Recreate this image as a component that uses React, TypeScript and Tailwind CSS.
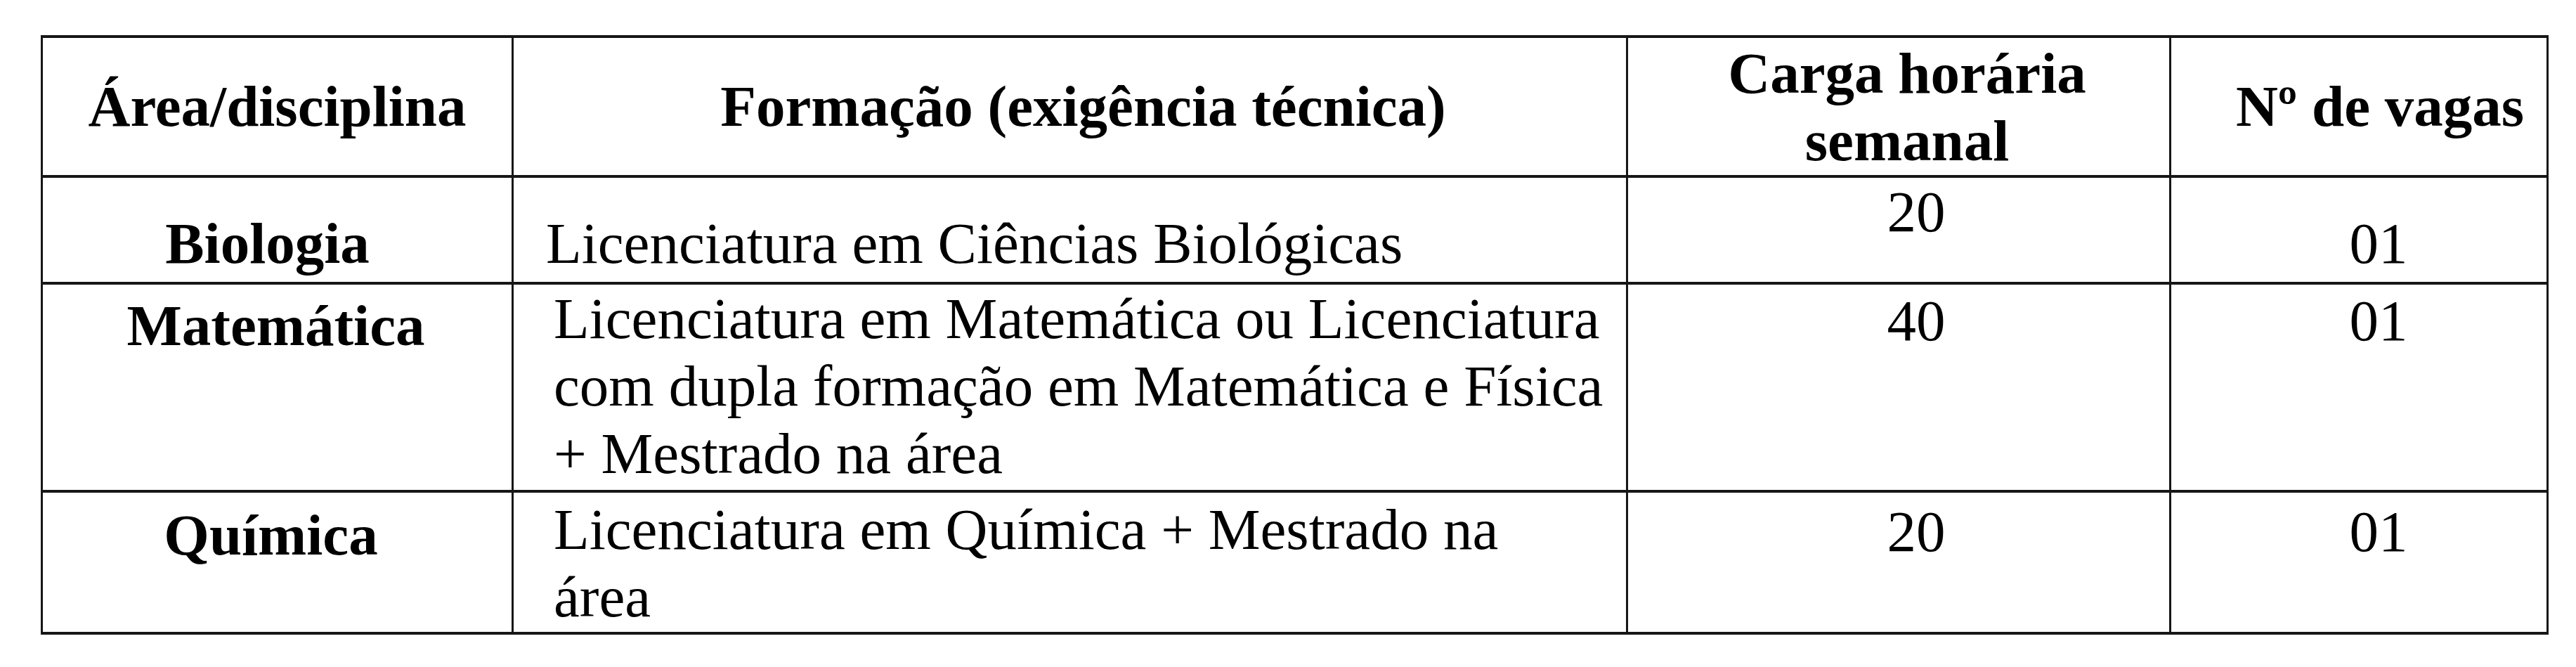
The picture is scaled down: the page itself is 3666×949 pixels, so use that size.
interface Vaga {
  area: string;
  areaPad: string;
  formacao: string[];
  formacaoPad: string;
  carga: string;
  cargaPad: string;
  vagas: string;
  vagasPad: string;
  rowHeight: string;
}

const vagas: Vaga[] = [
  {
    area: "Biologia",
    areaPad: "pt-[45px] pr-[28px]",
    formacao: ["Licenciatura em Ciências Biológicas"],
    formacaoPad: "pt-[45px] pl-[46px]",
    carga: "20",
    cargaPad: "pt-0 pl-[50px]",
    vagas: "01",
    vagasPad: "pt-[45px] pl-[56px]",
    rowHeight: "h-[152px]",
  },
  {
    area: "Matemática",
    areaPad: "pt-[10px] pr-[4px]",
    formacao: [
      "Licenciatura em Matemática ou Licenciatura",
      "com dupla formação em Matemática e Física",
      "+ Mestrado na área",
    ],
    formacaoPad: "pt-0 pl-[57px]",
    carga: "40",
    cargaPad: "pt-[3px] pl-[50px]",
    vagas: "01",
    vagasPad: "pt-[3px] pl-[56px]",
    rowHeight: "h-[296px]",
  },
  {
    area: "Química",
    areaPad: "pt-[12px] pr-[18px]",
    formacao: ["Licenciatura em Química + Mestrado na", "área"],
    formacaoPad: "pt-[4px] pl-[57px]",
    carga: "20",
    cargaPad: "pt-[7px] pl-[50px]",
    vagas: "01",
    vagasPad: "pt-[7px] pl-[56px]",
    rowHeight: "h-[202px]",
  },
];

// bordas: horizontais um pouco mais grossas que as verticais, como no original
const cell = "border-r-[3px] border-b-[4px] border-[#161616]";

export default function App() {
  return (
    <div className="w-[3666px] h-[949px] bg-white text-black font-['Liberation_Serif','Times_New_Roman',serif] text-[83px] leading-[96px]">
      <div className="pt-[50px] pl-[58px]">
        <div className="grid grid-cols-[670px_1586px_773px_537px] w-fit border-l-[3px] border-t-[4px] border-[#161616]">
          {/* cabeçalho */}
          <div className={`${cell} h-[199px] flex items-center justify-center font-bold pb-[2px]`}>
            Área/disciplina
          </div>
          <div className={`${cell} h-[199px] flex items-center justify-center font-bold pl-[38px] pb-[2px]`}>
            Formação (exigência técnica)
          </div>
          <div className={`${cell} h-[199px] pt-[2px] pl-[24px] text-center font-bold`}>
            Carga horária
            <br />
            semanal
          </div>
          <div className={`${cell} h-[199px] flex items-center justify-center font-bold pl-[60px] pb-[2px]`}>
            Nº de vagas
          </div>

          {vagas.map((v) => (
            <div key={v.area} className="contents">
              <div className={`${cell} ${v.rowHeight} ${v.areaPad} text-center font-bold`}>
                {v.area}
              </div>
              <div className={`${cell} ${v.rowHeight} ${v.formacaoPad} whitespace-nowrap`}>
                {v.formacao.map((linha) => (
                  <div key={linha}>{linha}</div>
                ))}
              </div>
              <div className={`${cell} ${v.rowHeight} ${v.cargaPad} text-center`}>
                {v.carga}
              </div>
              <div className={`${cell} ${v.rowHeight} ${v.vagasPad} text-center`}>
                {v.vagas}
              </div>
            </div>
          ))}
        </div>
      </div>
    </div>
  );
}
